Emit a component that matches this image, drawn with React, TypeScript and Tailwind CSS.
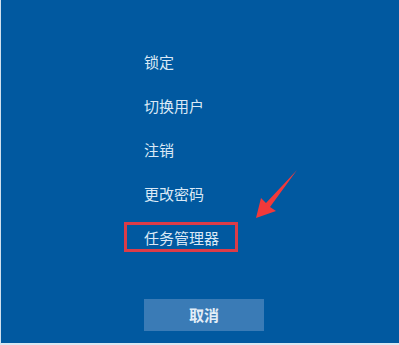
import React from "react";

const items = ["锁定", "切换用户", "注销", "更改密码"];

export default function App() {
  return (
    <div
      className="relative w-[399px] h-[345px] overflow-hidden bg-[#0159a0] border-l border-l-[#cfe0ee] border-b-2 border-b-[#dbe8f2] flex flex-col"
      style={{ fontFamily: '"Microsoft YaHei", "Noto Sans CJK SC", sans-serif' }}
    >
      <div className="flex flex-col pl-[143px] pt-[52px] gap-[24px] text-[15px] leading-[20px] text-[#dbe9f6]">
        {items.map((t) => (
          <div key={t}>{t}</div>
        ))}
        <div className="relative">
          <span>任务管理器</span>
          <div className="absolute left-[-20px] top-[-6px] w-[114px] h-[30px] border-[3px] border-[#dc3c48]" />
        </div>
      </div>
      <div className="pl-[143px] mt-[51px]">
        <button className="w-[120px] h-[32px] bg-[#3a7bb6] text-[#e3eef8] text-[15px] font-bold leading-[32px]">
          取消
        </button>
      </div>
      <svg
        className="absolute left-0 top-0 pointer-events-none"
        width="399"
        height="345"
        viewBox="0 0 399 345"
      >
        <polygon
          points="296,170 269,207 275,211 255,218 260,198 265,203"
          fill="#f2393a"
        />
      </svg>
    </div>
  );
}
